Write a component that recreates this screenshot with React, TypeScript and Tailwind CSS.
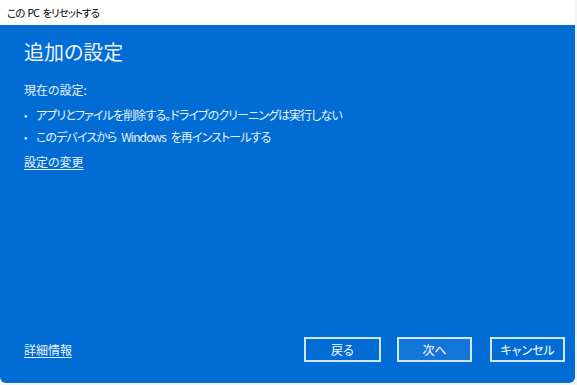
import React from 'react';

const jp = "font-['Yu_Gothic_UI','Noto_Sans_CJK_JP',sans-serif] [font-feature-settings:'palt']";

const ResetPcDialog = () => {
  const bullets = [
    'アプリとファイルを削除する。ドライブのクリーニングは実行しない',
    'このデバイスから Windows を再インストールする',
  ];

  return (
    <div className={`w-[577px] h-[385px] bg-[#f3f3f3] overflow-hidden ${jp}`}>
      <div className="w-[575px] h-[383px] flex flex-col">
        {/* title bar */}
        <div className="h-[25px] bg-white flex items-center px-[7px] text-[10.5px] tracking-[-1px] [word-spacing:2px] text-black">
          この PC をリセットする
        </div>

        {/* body */}
        <div className="flex-1 bg-[#006cd4] rounded-b-[6px] flex flex-col px-6 pt-[12px] pb-[21px] text-[#eaf3fc]">
          <h1 className="text-[20px] leading-[30px] font-normal">追加の設定</h1>

          <div className="mt-[12px] text-[12px] leading-[22px]">
            <p>現在の設定:</p>
            <ul className="mt-[3px] space-y-0">
              {bullets.map((b) => (
                <li key={b} className="flex items-center h-[22px]">
                  <span className="w-[12px] text-[10px]">•</span>
                  <span className="tracking-[-0.9px] [word-spacing:3px]">{b}</span>
                </li>
              ))}
            </ul>
            <a className="block mt-[3px] underline underline-offset-2 w-fit">設定の変更</a>
          </div>

          <div className="mt-auto flex items-center">
            <a className="text-[12px] underline underline-offset-2">詳細情報</a>
            <div className="ml-auto flex mr-[-14px]">
              <button className="w-[77px] h-[25px] border-2 border-[#cfe7f7] text-[12px] text-white">戻る</button>
              <button className="ml-[16px] w-[75px] h-[25px] border-2 border-[#cfe7f7] bg-[#1476d8] text-[12px] text-white">次へ</button>
              <button className="ml-[18px] w-[75px] h-[25px] border-2 border-[#cfe7f7] text-[12px] text-white">キャンセル</button>
            </div>
          </div>
        </div>
      </div>
    </div>
  );
};

export default function App() {
  return <ResetPcDialog />;
}
